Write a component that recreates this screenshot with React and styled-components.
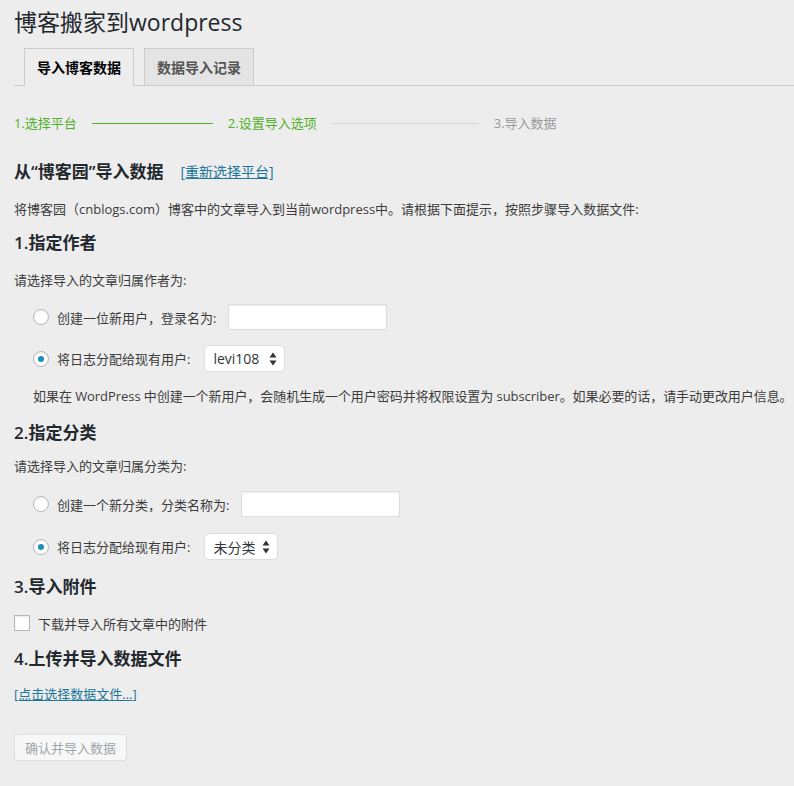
import React from "react";
import styled, { createGlobalStyle } from "styled-components";

const Global = createGlobalStyle`
  html, body { margin: 0; padding: 0; background: #ededed; }
  body { font-family: "Open Sans", "Noto Sans CJK SC", sans-serif; color: #444; }
`;

const Page = styled.div`
  width: 794px;
  height: 786px;
  overflow: hidden;
  box-sizing: border-box;
  padding: 7px 0 0 14px;
  display: flex;
  flex-direction: column;
  background: #ededed;
`;

const Title = styled.h1`
  margin: 0;
  font-size: 23px;
  font-weight: 400;
  line-height: 30px;
  color: #23282d;
`;

const Nav = styled.div`
  margin-top: 11px;
  height: 37px;
  display: flex;
  align-items: flex-end;
  gap: 10px;
  padding-left: 10px;
  border-bottom: 1px solid #ccc;
`;

const Tab = styled.div`
  box-sizing: border-box;
  height: ${(p) => (p.$active ? "38px" : "37px")};
  margin-bottom: ${(p) => (p.$active ? "-1px" : "0")};
  padding: 0 12px;
  display: flex;
  align-items: center;
  border: 1px solid #ccc;
  border-bottom: none;
  background: ${(p) => (p.$active ? "#ededed" : "#e4e4e4")};
  color: ${(p) => (p.$active ? "#000" : "#555")};
  font-size: 14px;
  font-weight: 600;
  padding-bottom: ${(p) => (p.$active ? "1px" : "0")};
`;

const Steps = styled.div`
  margin-top: 27px;
  height: 20px;
  display: flex;
  align-items: center;
  gap: 15px;
  font-size: 13px;
`;

const Step = styled.span`
  color: ${(p) => (p.$done ? "#4fb02a" : "#999")};
  line-height: 20px;
`;

const StepLine = styled.span`
  display: block;
  width: ${(p) => p.$w}px;
  height: 1px;
  background: ${(p) => (p.$done ? "#4fb02a" : "#d4d4d4")};
`;

const Heading = styled.h2`
  margin: ${(p) => p.$mt}px 0 0;
  font-size: 17px;
  font-weight: 600;
  line-height: 24px;
  color: #23282d;
  display: flex;
  align-items: center;
  gap: 17px;
`;

const Link = styled.a`
  font-size: ${(p) => p.$size || 13}px;
  font-weight: 400;
  color: #21759b;
  text-decoration: underline;
  cursor: pointer;
`;

const Text = styled.p`
  margin: ${(p) => p.$mt}px 0 0;
  padding-left: ${(p) => p.$indent || 0}px;
  font-size: 13px;
  line-height: 20px;
  white-space: nowrap;
  letter-spacing: ${(p) => p.$tight ? "-0.06px" : "0"};
  color: #3c3c3c;
`;

const Row = styled.label`
  margin-top: ${(p) => p.$mt}px;
  padding-left: 19px;
  height: ${(p) => p.$h || 26}px;
  display: flex;
  align-items: center;
  font-size: 13px;
  color: #3c3c3c;
`;

const Radio = styled.span`
  box-sizing: border-box;
  width: 16px;
  height: 16px;
  border-radius: 50%;
  border: 1px solid #b4b9be;
  background: #fff;
  box-shadow: inset 0 1px 2px rgba(0, 0, 0, 0.07);
  display: flex;
  align-items: center;
  justify-content: center;
  margin-right: 8px;
  &::before {
    content: "";
    display: ${(p) => (p.$checked ? "block" : "none")};
    width: 6px;
    height: 6px;
    border-radius: 50%;
    background: #1e8cbe;
  }
`;

const TextInput = styled.span`
  box-sizing: border-box;
  display: block;
  width: 159px;
  height: 26px;
  margin-left: ${(p) => p.$ml}px;
  background: #fff;
  border: 1px solid #ddd;
  box-shadow: inset 0 1px 2px rgba(0, 0, 0, 0.07);
`;

const Select = styled.span`
  box-sizing: border-box;
  height: 27px;
  width: ${(p) => p.$w}px;
  margin-left: 14px;
  padding: 0 7px 0 8px;
  display: flex;
  align-items: center;
  justify-content: space-between;
  background: #fff;
  border: 1px solid #ddd;
  border-radius: 5px;
  font-size: 14px;
  color: #32373c;
`;

const Checkbox = styled.span`
  box-sizing: border-box;
  width: 16px;
  height: 16px;
  border: 1px solid #b4b9be;
  background: #fff;
  box-shadow: inset 0 1px 2px rgba(0, 0, 0, 0.1);
  margin-right: 8px;
`;

const CheckRow = styled.label`
  margin-top: 14px;
  height: 20px;
  display: flex;
  align-items: center;
  font-size: 13px;
  color: #3c3c3c;
`;

const Button = styled.button`
  margin-top: 30px;
  align-self: flex-start;
  box-sizing: border-box;
  height: 27px;
  width: 113px;
  padding: 0;
  font-family: inherit;
  font-size: 13px;
  color: #a0a5aa;
  background: #f7f7f7;
  border: 1px solid #ddd;
  border-radius: 3px;
`;

const Arrows = () => (
  <svg width="8" height="14" viewBox="0 0 8 14">
    <path d="M4 0.5 L7.5 5.5 H0.5 Z" fill="#333" />
    <path d="M4 13.5 L7.5 8.5 H0.5 Z" fill="#333" />
  </svg>
);

export default function App() {
  return (
    <>
      <Global />
      <Page>
        <Title>博客搬家到wordpress</Title>
        <Nav>
          <Tab $active>导入博客数据</Tab>
          <Tab>数据导入记录</Tab>
        </Nav>
        <Steps>
          <Step $done>1.选择平台</Step>
          <StepLine $done $w={121} />
          <Step $done>2.设置导入选项</Step>
          <StepLine $w={147} />
          <Step>3.导入数据</Step>
        </Steps>
        <Heading $mt={27}>
          从“博客园”导入数据
          <Link $size={14}>[重新选择平台]</Link>
        </Heading>
        <Text $mt={15}>
          将博客园（cnblogs.com）博客中的文章导入到当前wordpress中。请根据下面提示，按照步骤导入数据文件:
        </Text>
        <Heading $mt={12}>1.指定作者</Heading>
        <Text $mt={15}>请选择导入的文章归属作者为:</Text>
        <Row $mt={14}>
          <Radio />
          创建一位新用户，登录名为:
          <TextInput $ml={12} />
        </Row>
        <Row $mt={15} $h={27}>
          <Radio $checked />
          将日志分配给现有用户:
          <Select $w={81}>
            levi108
            <Arrows />
          </Select>
        </Row>
        <Text $mt={14} $indent={19} $tight>
          如果在 WordPress 中创建一个新用户，会随机生成一个用户密码并将权限设置为 subscriber。如果必要的话，请手动更改用户信息。
        </Text>
        <Heading $mt={15}>2.指定分类</Heading>
        <Text $mt={11}>请选择导入的文章归属分类为:</Text>
        <Row $mt={15}>
          <Radio />
          创建一个新分类，分类名称为:
          <TextInput $ml={12} />
        </Row>
        <Row $mt={16} $h={27}>
          <Radio $checked />
          将日志分配给现有用户:
          <Select $w={74}>
            未分类
            <Arrows />
          </Select>
        </Row>
        <Heading $mt={15}>3.导入附件</Heading>
        <CheckRow>
          <Checkbox />
          下载并导入所有文章中的附件
        </CheckRow>
        <Heading $mt={14}>4.上传并导入数据文件</Heading>
        <Text $mt={13}>
          <Link>[点击选择数据文件...]</Link>
        </Text>
        <Button disabled>确认并导入数据</Button>
      </Page>
    </>
  );
}
